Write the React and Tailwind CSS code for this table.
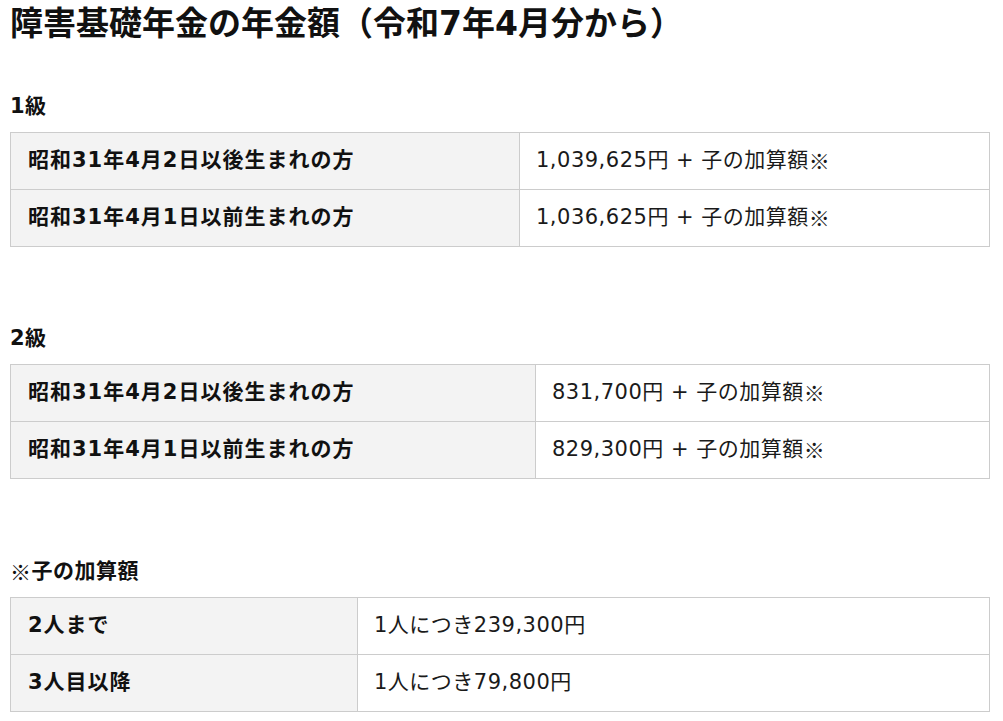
import React from 'react';

const font = { fontFamily: '"DejaVu Sans", "Noto Sans CJK JP", "Noto Sans", sans-serif' };

// ※ should come from the CJK face (full width), not DejaVu's small one
const Kome = () => <span style={{ fontFamily: '"Noto Sans CJK JP", sans-serif' }}>※</span>;

function Section({ label, rows, leftWidth, className = '' }) {
  return (
    <section className={className}>
      <h3 className="h-[30px] flex items-center text-[21px] font-bold mb-[10px] tracking-[0.5px] text-[#111]">{label}</h3>
      <div
        className="grid border-t border-l border-[#cccccc]"
        style={{ gridTemplateColumns: `${leftWidth}px 1fr` }}
      >
        {rows.map(([k, v], i) => (
          <React.Fragment key={i}>
            <div className="h-[57px] flex items-center pl-[17px] bg-[#f3f3f3] border-r border-b border-[#cccccc] text-[21px] font-bold tracking-[1px] text-[#111]">
              {k}
            </div>
            <div className="h-[57px] flex items-center pl-[16px] border-r border-b border-[#cccccc] text-[21px] tracking-[0.5px] text-[#1a1a1a]">
              {v}
            </div>
          </React.Fragment>
        ))}
      </div>
    </section>
  );
}

export default function App() {
  return (
    <div className="bg-white w-[1003px] min-h-[721px] pl-[10px]" style={font}>
      <div className="w-[980px]">
        <h2 className="text-[33px] font-bold leading-[48px] text-[#111] mb-[44px]">
          障害基礎年金の年金額（令和7年4月分から）
        </h2>
        <Section
          label="1級"
          leftWidth={509}
          rows={[
            ['昭和31年4月2日以後生まれの方', <>1,039,625円 + 子の加算額<Kome /></>],
            ['昭和31年4月1日以前生まれの方', <>1,036,625円 + 子の加算額<Kome /></>],
          ]}
        />
        <Section
          className="mt-[77px]"
          label="2級"
          leftWidth={525}
          rows={[
            ['昭和31年4月2日以後生まれの方', <>831,700円 + 子の加算額<Kome /></>],
            ['昭和31年4月1日以前生まれの方', <>829,300円 + 子の加算額<Kome /></>],
          ]}
        />
        <Section
          className="mt-[78px]"
          label={<><Kome />子の加算額</>}
          leftWidth={347}
          rows={[
            ['2人まで', '1人につき239,300円'],
            ['3人目以降', '1人につき79,800円'],
          ]}
        />
      </div>
    </div>
  );
}
